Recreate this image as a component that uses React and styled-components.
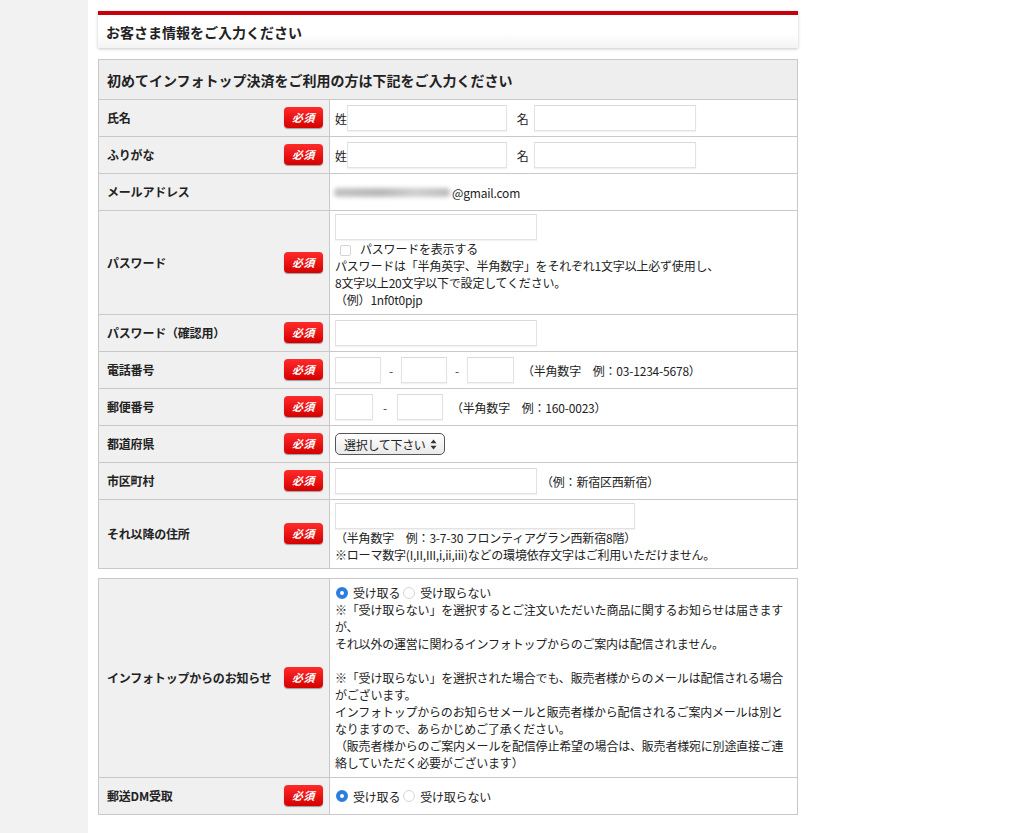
import React from "react";
import styled, { createGlobalStyle } from "styled-components";

const GlobalStyle = createGlobalStyle`
  body {
    margin: 0;
    background: #fff;
    color: #222;
    font-family: "Noto Sans CJK JP", "Noto Sans", sans-serif;
  }
  * { box-sizing: border-box; }
`;

const App = () => {
  return (
    <>
      <GlobalStyle />
      <Page>
        <Gutter />
        <Main>
          <Content>
            <TitleBox>お客さま情報をご入力ください</TitleBox>

            <FormTable>
              <colgroup>
                <col style={{ width: 231 }} />
                <col />
              </colgroup>
              <tbody>
                <tr>
                  <HeadCell colSpan={2}>
                    初めてインフォトップ決済をご利用の方は下記をご入力ください
                  </HeadCell>
                </tr>
                <FieldRow label="氏名">
                  <Inline>
                    <Prefix>姓</Prefix>
                    <TextInput $w={160} />
                    <Prefix $gap={10}>名</Prefix>
                    <TextInput $w={162} $gap={5} />
                  </Inline>
                </FieldRow>
                <FieldRow label="ふりがな">
                  <Inline>
                    <Prefix>姓</Prefix>
                    <TextInput $w={160} />
                    <Prefix $gap={10}>名</Prefix>
                    <TextInput $w={162} $gap={5} />
                  </Inline>
                </FieldRow>
                <FieldRow label="メールアドレス" required={false}>
                  <Inline>
                    <Blurred aria-hidden="true" />
                    <span>@gmail.com</span>
                  </Inline>
                </FieldRow>
                <FieldRow label="パスワード" top={3}>
                  <TextInput type="password" $w={202} />
                  <CheckLine>
                    <Checkbox />
                    パスワードを表示する
                  </CheckLine>
                  <Line>パスワードは「半角英字、半角数字」をそれぞれ1文字以上必ず使用し、</Line>
                  <Line>8文字以上20文字以下で設定してください。</Line>
                  <Line>（例）1nf0t0pjp</Line>
                </FieldRow>
                <FieldRow label="パスワード（確認用）">
                  <Inline>
                    <TextInput type="password" $w={202} />
                  </Inline>
                </FieldRow>
                <FieldRow label="電話番号">
                  <Inline>
                    <TextInput $w={46} />
                    <Dash>-</Dash>
                    <TextInput $w={46} />
                    <Dash>-</Dash>
                    <TextInput $w={47} />
                    <Note>（半角数字　例：03-1234-5678）</Note>
                  </Inline>
                </FieldRow>
                <FieldRow label="郵便番号">
                  <Inline>
                    <TextInput $w={38} />
                    <Dash $space={10}>-</Dash>
                    <TextInput $w={46} />
                    <Note>（半角数字　例：160-0023）</Note>
                  </Inline>
                </FieldRow>
                <FieldRow label="都道府県">
                  <Inline>
                    <SelectWrap>
                      <Select defaultValue="">
                        <option value="">選択して下さい</option>
                        <option>東京都</option>
                        <option>大阪府</option>
                      </Select>
                      <SelectArrow viewBox="0 0 7 11" width="7" height="11">
                        <path d="M3.5 0.5 L6.5 4.2 L0.5 4.2 Z" fill="#333" />
                        <path d="M3.5 10.5 L6.5 6.8 L0.5 6.8 Z" fill="#333" />
                      </SelectArrow>
                    </SelectWrap>
                  </Inline>
                </FieldRow>
                <FieldRow label="市区町村">
                  <Inline>
                    <TextInput $w={202} />
                    <Note $gap={4}>（例：新宿区西新宿）</Note>
                  </Inline>
                </FieldRow>
                <FieldRow label="それ以降の住所" top={3} bottom={5}>
                  <TextInput $w={300} />
                  <Line>（半角数字　例：3-7-30 フロンティアグラン西新宿8階）</Line>
                  <Line>※ローマ数字(I,II,III,i,ii,iii)などの環境依存文字はご利用いただけません。</Line>
                </FieldRow>
              </tbody>
            </FormTable>

            <FormTable $spaced>
              <colgroup>
                <col style={{ width: 231 }} />
                <col />
              </colgroup>
              <tbody>
                <FieldRow label="インフォトップからのお知らせ" top={5} bottom={6}>
                  <RadioLine>
                    <Radio name="notice" defaultChecked />
                    <span>受け取る</span>
                    <Radio name="notice" $gap={3} />
                    <span>受け取らない</span>
                  </RadioLine>
                  <Line>※「受け取らない」を選択するとご注文いただいた商品に関するお知らせは届きます</Line>
                  <Line>が、</Line>
                  <Line>それ以外の運営に関わるインフォトップからのご案内は配信されません。</Line>
                  <Line>&nbsp;</Line>
                  <Line>※「受け取らない」を選択された場合でも、販売者様からのメールは配信される場合</Line>
                  <Line>がございます。</Line>
                  <Line>インフォトップからのお知らせメールと販売者様から配信されるご案内メールは別と</Line>
                  <Line>なりますので、あらかじめご了承ください。</Line>
                  <Line>（販売者様からのご案内メールを配信停止希望の場合は、販売者様宛に別途直接ご連</Line>
                  <Line>絡していただく必要がございます）</Line>
                </FieldRow>
                <FieldRow label="郵送DM受取">
                  <Inline>
                    <Radio name="dm" defaultChecked />
                    <span>受け取る</span>
                    <Radio name="dm" $gap={3} />
                    <span>受け取らない</span>
                  </Inline>
                </FieldRow>
              </tbody>
            </FormTable>
          </Content>
        </Main>
      </Page>
    </>
  );
};

const FieldRow = ({ label, required = true, top = 5, bottom, children }) => (
  <tr>
    <LabelCell>
      <LabelInner>
        <span>{label}</span>
        {required && <Badge>必須</Badge>}
      </LabelInner>
    </LabelCell>
    <ValueCell $top={top} $bottom={bottom ?? (top === 5 ? 5 : 6)}>
      {children}
    </ValueCell>
  </tr>
);

const Page = styled.div`
  display: flex;
  min-height: 833px;
`;
const Gutter = styled.div`
  width: 88px;
  flex-shrink: 0;
  background: #f2f2f2;
`;
const Main = styled.div`
  flex: 1;
  background: #fff;
  padding: 11px 10px 18px;
`;
const Content = styled.div`
  width: 700px;
`;
const TitleBox = styled.div`
  height: 37px;
  border-top: 4px solid #c8000b;
  background: linear-gradient(#fff 55%, #f3f3f3);
  box-shadow: 0 1px 3px rgba(0, 0, 0, 0.22);
  padding: 0 8px;
  display: flex;
  align-items: center;
  font-size: 14px;
  font-weight: 700;
  color: #222;
`;
const FormTable = styled.table`
  width: 700px;
  margin-top: ${(p) => (p.$spaced ? "9px" : "11px")};
  border-collapse: collapse;
  table-layout: fixed;
  font-size: 12px;
  letter-spacing: -0.2px;
  color: #222;
`;
const HeadCell = styled.td`
  height: 40px;
  padding: 0 8px;
  background: #eeeeee;
  border: 1px solid #c9c9c9;
  font-size: 14px;
  font-weight: 700;
  letter-spacing: 0;
`;
const LabelCell = styled.td`
  background: #f0f0f0;
  border: 1px solid #c9c9c9;
  padding: 0 6px 0 8px;
  vertical-align: middle;
`;
const LabelInner = styled.div`
  display: flex;
  align-items: center;
  justify-content: space-between;
  font-weight: 700;
  line-height: 17px;
  margin-top: -1px;
`;
const Badge = styled.span`
  width: 39px;
  height: 21px;
  border-radius: 4px;
  background: linear-gradient(#ff2b2b, #d50000);
  box-shadow: 0 1px 1px rgba(0, 0, 0, 0.35);
  color: #fff;
  font-size: 11px;
  font-weight: 700;
  font-style: italic;
  letter-spacing: 0.5px;
  display: flex;
  align-items: center;
  justify-content: center;
`;
const ValueCell = styled.td`
  background: #fff;
  border: 1px solid #c9c9c9;
  padding: ${(p) => p.$top}px 5px ${(p) => p.$bottom}px 5px;
  vertical-align: middle;
  line-height: 17px;
`;
const Inline = styled.div`
  display: flex;
  align-items: center;
  min-height: 26px;
  white-space: nowrap;
`;
const Prefix = styled.span`
  margin-left: ${(p) => p.$gap || 0}px;
`;
const TextInput = styled.input`
  display: block;
  width: ${(p) => p.$w}px;
  height: 26px;
  margin-left: ${(p) => p.$gap || 0}px;
  border: 1px solid #e3e3e3;
  border-top-color: #dadada;
  box-shadow: 0 1px 1px rgba(0, 0, 0, 0.05);
  background: #fff;
  outline: none;
  font: inherit;
`;
const Dash = styled.span`
  margin: 0 ${(p) => p.$space || 8}px;
  color: #444;
`;
const Note = styled.span`
  margin-left: ${(p) => p.$gap ?? 8}px;
`;
const Blurred = styled.span`
  display: inline-block;
  width: 116px;
  height: 9px;
  margin: 1px 2px 0 -1px;
  border-radius: 4px;
  background: linear-gradient(90deg, #c4c4c4, #b8b8b8 40%, #cfcfcf 70%, #bdbdbd);
  filter: blur(2px);
`;
const Line = styled.div`
  line-height: 17px;
  white-space: nowrap;
`;
const CheckLine = styled.label`
  display: flex;
  align-items: center;
  height: 17px;
`;
const Checkbox = styled.input.attrs({ type: "checkbox" })`
  appearance: none;
  width: 11px;
  height: 11px;
  margin: 3px 9px 0 5px;
  border: 1px solid #d4d4d4;
  border-radius: 2px;
  background: #fff;
`;
const RadioLine = styled.div`
  display: flex;
  align-items: center;
  height: 17px;
  white-space: nowrap;
`;
const Radio = styled.input.attrs({ type: "radio" })`
  appearance: none;
  width: 12px;
  height: 12px;
  margin: 0 5px 0 ${(p) => p.$gap ?? 1}px;
  border-radius: 50%;
  border: 1px solid #d6d6d6;
  background: #fff;
  &:checked {
    border: 4px solid #2d7ce0;
  }
`;
const SelectWrap = styled.div`
  position: relative;
  margin: 2px 0;
`;
const Select = styled.select`
  appearance: none;
  display: block;
  width: 110px;
  height: 22px;
  padding: 0 14px 0 8px;
  border: 1px solid #555;
  border-radius: 5px;
  background: linear-gradient(#ffffff, #e9e9e9);
  color: #222;
  font: inherit;
  font-size: 12px;
  letter-spacing: -0.3px;
`;
const SelectArrow = styled.svg`
  position: absolute;
  right: 8px;
  top: 6px;
  pointer-events: none;
`;

export default App;
